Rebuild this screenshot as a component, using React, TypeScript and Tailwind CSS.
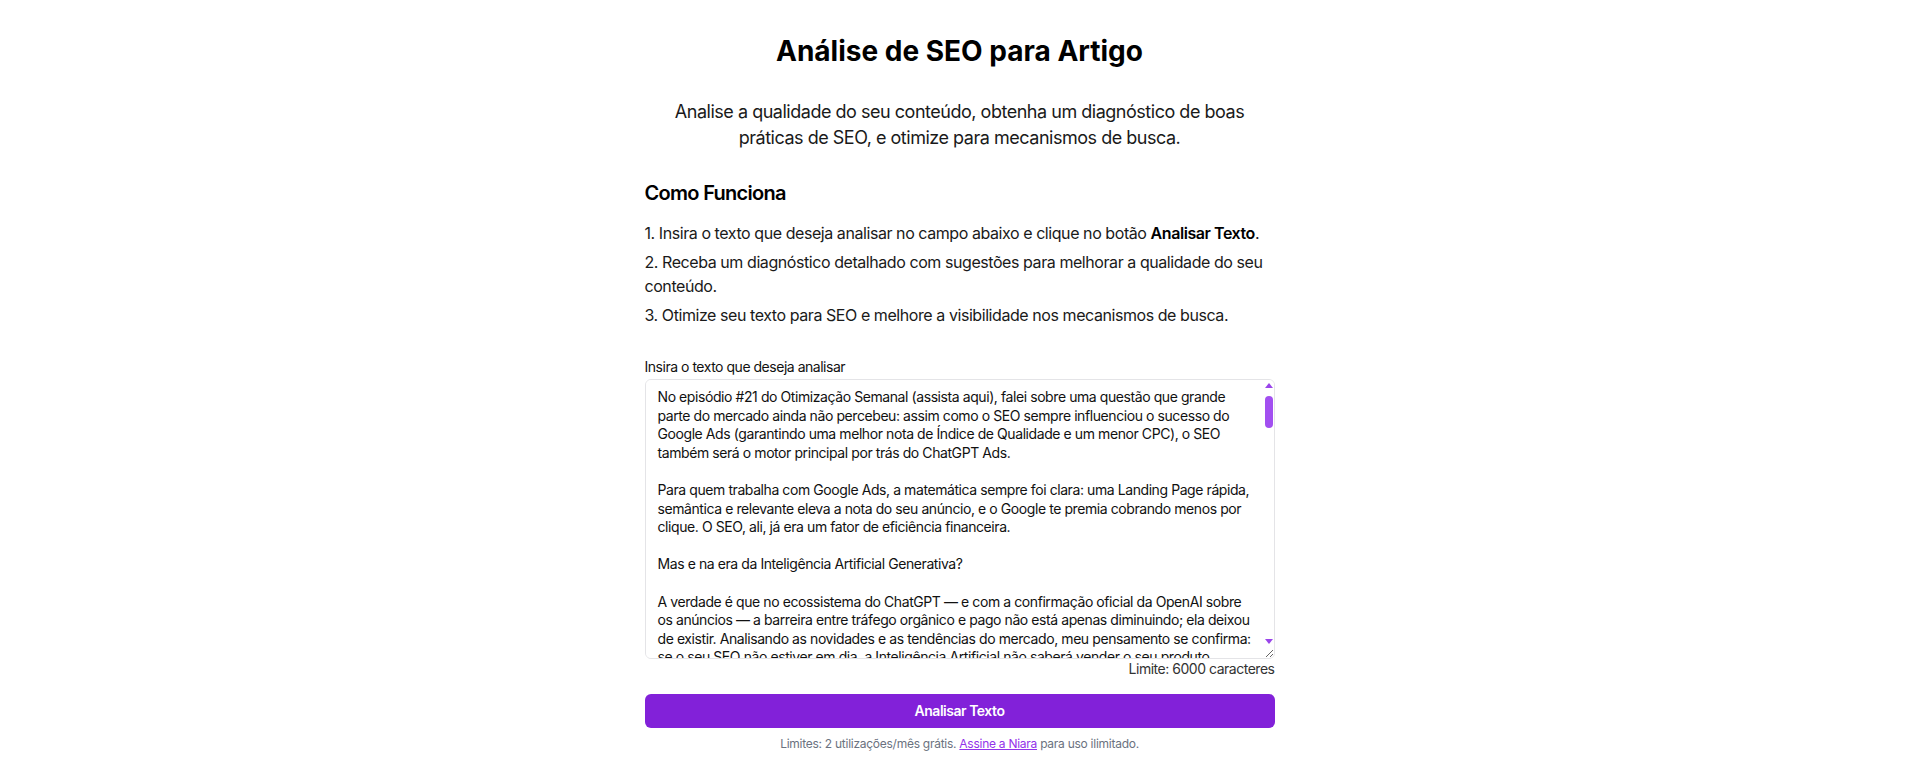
import React from "react";

const ARTICLE = `No episódio #21 do Otimização Semanal (assista aqui), falei sobre uma questão que grande parte do mercado ainda não percebeu: assim como o SEO sempre influenciou o sucesso do Google Ads (garantindo uma melhor nota de Índice de Qualidade e um menor CPC), o SEO também será o motor principal por trás do ChatGPT Ads.

Para quem trabalha com Google Ads, a matemática sempre foi clara: uma Landing Page rápida, semântica e relevante eleva a nota do seu anúncio, e o Google te premia cobrando menos por clique. O SEO, ali, já era um fator de eficiência financeira.

Mas e na era da Inteligência Artificial Generativa?

A verdade é que no ecossistema do ChatGPT — e com a confirmação oficial da OpenAI sobre os anúncios — a barreira entre tráfego orgânico e pago não está apenas diminuindo; ela deixou de existir. Analisando as novidades e as tendências do mercado, meu pensamento se confirma: se o seu SEO não estiver em dia, a Inteligência Artificial não saberá vender o seu produto.

Por que o SEO será o critério de qualidade do ChatGPT Ads?

No Google, o algoritmo analisa a sua página para decidir quanto você vai pagar pelo clique. No ChatGPT, o modelo de linguagem precisa entender o seu conteúdo para decidir se ele é relevante o suficiente para ser mostrado ao usuário dentro de uma conversa.

Isso significa que textos rasos, páginas lentas e conteúdos sem estrutura semântica terão cada vez menos espaço. A IA não lê palavras-chave soltas: ela interpreta contexto, intenção e autoridade.

1. Contexto acima de palavras-chave

Durante anos, muita gente otimizou páginas repetindo termos de busca à exaustão. Esse modelo já vinha perdendo força no Google e simplesmente não funciona com modelos de linguagem. O que importa agora é responder, de forma clara e completa, às perguntas que o seu público realmente faz.

2. Autoridade e confiança

Os modelos de IA priorizam fontes confiáveis. Conteúdos assinados por especialistas, com dados verificáveis, referências e atualizações frequentes, tendem a ser citados com mais frequência nas respostas geradas.

3. Estrutura e legibilidade

Títulos bem definidos, parágrafos curtos, listas e marcações semânticas facilitam a leitura tanto para pessoas quanto para máquinas. Uma página bem estruturada é mais fácil de resumir, citar e recomendar.

4. Experiência do usuário

Velocidade de carregamento, navegação simples e versões otimizadas para dispositivos móveis continuam sendo essenciais. Se o usuário clica no anúncio e encontra uma página confusa, a conversão cai — e o custo sobe.

O que fazer a partir de agora?

Revise os conteúdos mais importantes do seu site, atualize informações desatualizadas, responda às dúvidas mais frequentes do seu público e garanta que cada página tenha um objetivo claro. Ferramentas de análise de SEO ajudam a identificar pontos de melhoria de forma rápida e objetiva.

Quem começar agora terá uma vantagem competitiva enorme quando os anúncios conversacionais se tornarem padrão. Quem esperar, vai pagar mais caro para aparecer — se conseguir aparecer.

No fim das contas, a lógica continua a mesma: conteúdo de qualidade sempre foi o melhor investimento. A diferença é que, com a Inteligência Artificial, essa regra ficou ainda mais evidente.`;

// barra de rolagem roxa desenhada por cima (o navegador headless esconde a nativa)
function PurpleScrollbar() {
  return (
    <div className="pointer-events-none absolute top-[4px] right-[2px] bottom-[14px] flex w-[8px] flex-col items-center">
      <div className="h-0 w-0 border-x-[4px] border-b-[5px] border-x-transparent border-b-[#9a45ea]" />
      <div className="mt-[8px] h-[32px] w-[8px] rounded-full bg-[#a24ff0]" />
      <div className="flex-1" />
      <div className="mb-[1px] h-0 w-0 border-x-[4px] border-t-[5px] border-x-transparent border-t-[#9a45ea]" />
    </div>
  );
}

export default function App() {
  return (
    <div className="min-h-screen bg-white font-['Inter','Noto_Sans',sans-serif] tracking-[-0.03em] text-[#111]">
      <div className="mx-auto flex w-[630px] flex-col pt-[33px] pb-6">
        <h1 className="text-center text-[28px] leading-9 font-bold tracking-normal text-black">
          Análise de SEO para Artigo
        </h1>

        <p className="mx-auto mt-[30px] max-w-[576px] text-center text-lg leading-[26px] text-[#1a1a1a]">
          Analise a qualidade do seu conteúdo, obtenha um diagnóstico de boas
          práticas de SEO, e otimize para mecanismos de busca.
        </p>

        <h2 className="mt-7 text-xl leading-7 font-semibold tracking-[-0.035em] text-black">
          Como Funciona
        </h2>

        <div className="mt-3.5 flex flex-col gap-[5px] text-base leading-6 tracking-[-0.027em] text-[#1a1a1a]">
          <p>
            1. Insira o texto que deseja analisar no campo abaixo e clique no
            botão <strong className="font-semibold text-black">Analisar Texto</strong>.
          </p>
          <p>
            2. Receba um diagnóstico detalhado com sugestões para melhorar a
            qualidade do seu conteúdo.
          </p>
          <p>
            3. Otimize seu texto para SEO e melhore a visibilidade nos
            mecanismos de busca.
          </p>
        </div>

        <label
          htmlFor="seo-text"
          className="mt-[30px] mb-0.5 text-sm leading-5 text-[#111]"
        >
          Insira o texto que deseja analisar
        </label>
        <div className="relative">
          <textarea
            id="seo-text"
            defaultValue={ARTICLE}
            className="block h-[280px] w-full resize-y rounded-md border border-[#e4e4e7] bg-white py-2 pr-[15px] pl-3 text-sm leading-[18.6px] tracking-[-0.03em] text-[#111] outline-none [scrollbar-width:none]"
          />
          <PurpleScrollbar />
        </div>
        <p className="text-right text-sm leading-5 text-[#333]">
          Limite: 6000 caracteres
        </p>

        <button
          type="button"
          className="mt-[15px] h-[34px] w-full rounded-md bg-[#8221d9] text-sm font-semibold text-white"
        >
          Analisar Texto
        </button>

        <p className="mt-2 text-center text-xs leading-4 tracking-[-0.022em] text-[#6b7280]">
          Limites: 2 utilizações/mês grátis.{" "}
          <a href="#" className="text-[#9333ea] underline">
            Assine a Niara
          </a>{" "}
          para uso ilimitado.
        </p>
      </div>
    </div>
  );
}
